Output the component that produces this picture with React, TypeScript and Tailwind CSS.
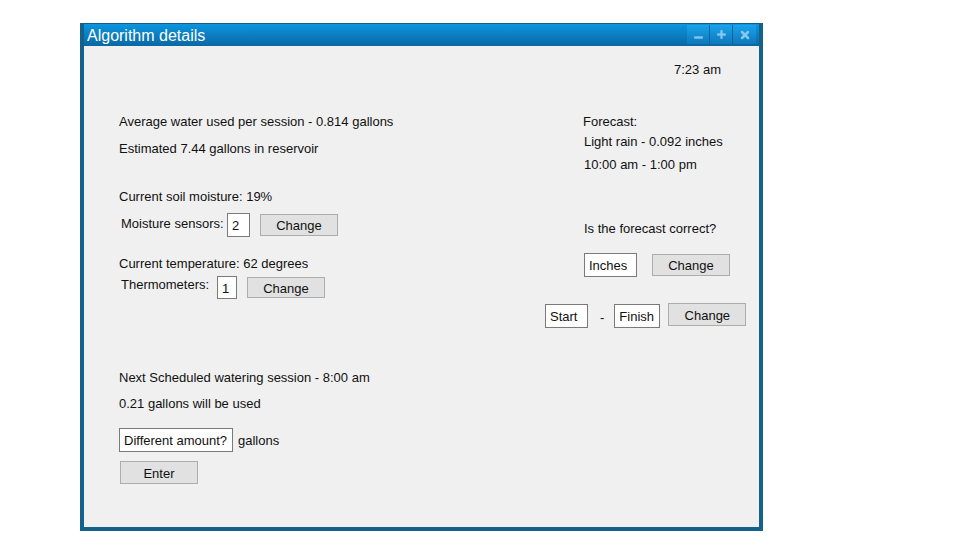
import { Minus, Plus, X } from 'lucide-react';

const font = { fontFamily: '"Liberation Sans", Arial, sans-serif' };

const Btn = ({ children, className }: { children: React.ReactNode; className?: string }) => (
  <div
    className={
      'flex items-center justify-center pt-[2px] bg-[#e1e1e1] border border-[#adadad] text-[13px] text-[#111] ' +
      (className ?? '')
    }
  >
    {children}
  </div>
);

const Box = ({ children, className }: { children: React.ReactNode; className?: string }) => (
  <div
    className={
      'flex items-center pt-[2px] bg-white border border-[#7a7a7a] text-[13px] text-[#111] ' + (className ?? '')
    }
  >
    {children}
  </div>
);

const Line = ({ children, className }: { children: React.ReactNode; className?: string }) => (
  <div className={'h-[14px] leading-[15px] text-[13px] text-[#111] whitespace-nowrap ' + (className ?? '')}>
    {children}
  </div>
);

export default function App() {
  return (
    <div className="w-[977px] h-[552px] bg-white pt-[23px] pl-[80px]" style={font}>
      <div className="w-[683px] h-[508px] flex flex-col border-x-4 border-b-4 border-[#13628c] bg-[#f0f0f0]">
        {/* title bar */}
        <div className="h-[23px] shrink-0 flex items-start justify-between bg-gradient-to-b from-[#0c95de] to-[#0a68a4] border-t border-[#0e5d8a]">
          <div className="pl-[3px] h-[22px] leading-[24px] text-[16px] text-white">Algorithm details</div>
          <div className="flex mt-[1px] mr-[3px] h-[19px]">
            <div className="w-[23px] h-full flex items-center justify-center bg-gradient-to-b from-[#1aa3ec] to-[#0e78ba] border-r border-[#0b6297]">
              <Minus size={11} strokeWidth={5} strokeLinecap="square" color="#86c8ee" className="mt-[5px]" />
            </div>
            <div className="w-[23px] h-full flex items-center justify-center bg-gradient-to-b from-[#1aa3ec] to-[#0e78ba] border-r border-[#0b6297]">
              <Plus size={11} strokeWidth={5} strokeLinecap="square" color="#86c8ee" />
            </div>
            <div className="w-[23px] h-full flex items-center justify-center bg-gradient-to-b from-[#1aa3ec] to-[#0e78ba]">
              <X size={12} strokeWidth={5} color="#86c8ee" />
            </div>
          </div>
        </div>

        {/* content */}
        <div className="flex-1 flex flex-col">
          <div className="flex justify-end pr-[38px] mt-[16px]">
            <Line>7:23 am</Line>
          </div>

          <div className="flex pl-[35px]">
            {/* left column */}
            <div className="w-[464px] flex flex-col">
              <Line className="mt-[38px]">Average water used per session - 0.814 gallons</Line>
              <Line className="mt-[13px]">Estimated 7.44 gallons in reservoir</Line>
              <Line className="mt-[34px]">Current soil moisture: 19%</Line>
              <div className="flex items-start mt-[10px] h-[24px]">
                <Line className="ml-[2px] mt-[3px] w-[106px]">Moisture sensors:</Line>
                <Box className="w-[23px] h-[24px] pl-[4px]">2</Box>
                <Btn className="ml-[10px] mt-[1px] w-[78px] h-[22px]">Change</Btn>
              </div>
              <Line className="mt-[19px]">Current temperature: 62 degrees</Line>
              <div className="flex items-start mt-[6px] h-[23px]">
                <Line className="ml-[2px] mt-[1px] w-[96px]">Thermometers:</Line>
                <Box className="w-[20px] h-[23px] pl-[4px]">1</Box>
                <Btn className="ml-[10px] mt-[1px] w-[78px] h-[21px]">Change</Btn>
              </div>
              <Line className="mt-[71px]">Next Scheduled watering session - 8:00 am</Line>
              <Line className="mt-[12px]">0.21 gallons will be used</Line>
              <div className="flex items-center mt-[18px]">
                <Box className="w-[114px] h-[24px] pl-[4px]">Different amount?</Box>
                <Line className="ml-[5px]">gallons</Line>
              </div>
              <Btn className="ml-[1px] mt-[9px] w-[78px] h-[23px]">Enter</Btn>
            </div>

            {/* right column */}
            <div className="flex flex-col">
              <Line className="mt-[38px]">Forecast:</Line>
              <Line className="mt-[6px] ml-[1px]">Light rain - 0.092 inches</Line>
              <Line className="mt-[9px] ml-[1px]">10:00 am - 1:00 pm</Line>
              <Line className="mt-[50px] ml-[1px]">Is the forecast correct?</Line>
              <div className="flex items-center mt-[18px] ml-[1px]">
                <Box className="w-[53px] h-[24px] pl-[4px]">Inches</Box>
                <Btn className="ml-[15px] w-[78px] h-[22px]">Change</Btn>
              </div>
              <div className="flex items-start mt-[26px] -ml-[38px]">
                <Box className="mt-[1px] w-[43px] h-[24px] pl-[4px]">Start</Box>
                <Line className="ml-[12px] mt-[7px]">-</Line>
                <Box className="ml-[10px] mt-[1px] w-[46px] h-[24px] pl-[4px]">Finish</Box>
                <Btn className="ml-[8px] w-[78px] h-[23px]">Change</Btn>
              </div>
            </div>
          </div>
        </div>
      </div>
    </div>
  );
}
